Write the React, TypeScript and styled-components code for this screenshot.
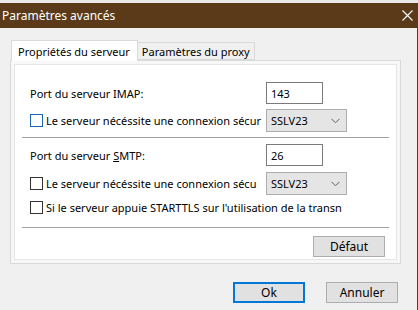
import React from "react";
import styled, { createGlobalStyle } from "styled-components";

const GlobalStyle = createGlobalStyle`
  html, body {
    margin: 0;
    padding: 0;
    background: #e9e9e9;
  }
  body {
    font-family: "Noto Sans", "Open Sans", sans-serif;
    font-size: 11px;
    color: #000;
  }
`;

const Window = styled.div`
  width: 418px;
  box-sizing: border-box;
  display: flex;
  flex-direction: column;
  background: #f0f0f0;
  border-right: 1px solid #5a3a1a;
  margin-top: 3px;
  height: 307px;
  overflow: hidden;
`;

const TitleBar = styled.div`
  height: 25px;
  flex: none;
  background: #5b3a19;
  color: #fff;
  display: flex;
  align-items: center;
  justify-content: space-between;
  padding: 0 4px 0 2px;
  font-size: 12px;
`;

const Body = styled.div`
  flex: 1;
  display: flex;
  flex-direction: column;
  padding: 11px 16px 0 10px;
`;

const TabStrip = styled.div`
  display: flex;
  align-items: flex-end;
  height: 21px;
  position: relative;
  z-index: 1;
`;

const Tab = styled.div<{ $active?: boolean }>`
  box-sizing: border-box;
  height: ${(p) => (p.$active ? "21px" : "18px")};
  margin-left: ${(p) => (p.$active ? "1px" : "0")};
  padding: ${(p) => (p.$active ? "1px 7px 0 6px" : "0 4px")};
  border: 1px solid #d9d9d9;
  border-bottom: ${(p) => (p.$active ? "none" : "1px solid #d9d9d9")};
  border-left: ${(p) => (p.$active ? "1px solid #d9d9d9" : "none")};
  background: ${(p) => (p.$active ? "#fff" : "#f0f0f0")};
  display: flex;
  align-items: center;
  white-space: nowrap;
  margin-bottom: ${(p) => (p.$active ? "-1px" : "0")};
`;

const TabPanel = styled.div`
  height: 204px;
  box-sizing: border-box;
  border: 1px solid #d9d9d9;
  background: #f7f7f7;
  padding: 3px;
  display: flex;
`;

const Page = styled.div`
  flex: 1;
  background: #fff;
  border: 1px solid #e6e6e6;
  display: flex;
  flex-direction: column;
  padding: 17px 11px 0 15px;
`;

const FieldRow = styled.div<{ $mt?: number }>`
  display: grid;
  grid-template-columns: 236px auto;
  align-items: center;
  height: 22px;
  margin-top: ${(p) => p.$mt ?? 0}px;
`;

const Label = styled.span`
  white-space: nowrap;
`;

const TextBox = styled.div`
  width: 57px;
  height: 22px;
  box-sizing: border-box;
  border: 1px solid #7a7a7a;
  background: #fff;
  padding: 0 4px;
  display: flex;
  align-items: center;
`;

const CheckLine = styled.label<{ $width: number }>`
  display: flex;
  align-items: center;
  gap: 3px;
  width: ${(p) => p.$width}px;
  white-space: nowrap;
`;

const CheckText = styled.span`
  flex: 1;
  min-width: 0;
  overflow: hidden;
`;

const Box = styled.span<{ $focus?: boolean }>`
  flex: none;
  width: 13px;
  height: 13px;
  box-sizing: border-box;
  border: 1px solid ${(p) => (p.$focus ? "#1c64b4" : "#333")};
  background: #fff;
`;

const Select = styled.div`
  width: 81px;
  height: 23px;
  box-sizing: border-box;
  border: 1px solid #adadad;
  background: #e5e5e5;
  display: flex;
  align-items: center;
  justify-content: space-between;
  padding: 0 6px 0 4px;
`;

const Separator = styled.div<{ $mt: number }>`
  height: 1px;
  background: #a0a0a0;
  margin: ${(p) => p.$mt}px -4px 0 -8px;
`;

const Actions = styled.div<{ $mt?: number }>`
  display: flex;
  justify-content: flex-end;
  gap: 21px;
  margin-top: ${(p) => p.$mt ?? 0}px;
`;

const Button = styled.div<{ $primary?: boolean }>`
  width: 72px;
  height: 21px;
  box-sizing: border-box;
  background: #e1e1e1;
  border: ${(p) => (p.$primary ? "2px solid #0078d7" : "1px solid #adadad")};
  display: flex;
  align-items: center;
  justify-content: center;
  font-size: 12px;
`;

const Footer = styled(Actions)`
  margin-top: 18px;
  margin-right: 3px;
`;

const Chevron = () => (
  <svg width="9" height="6" viewBox="0 0 9 6">
    <path d="M0.5 0.8 L4.5 4.8 L8.5 0.8" fill="none" stroke="#606060" strokeWidth="1" />
  </svg>
);

const CloseIcon = () => (
  <svg width="11" height="11" viewBox="0 0 11 11">
    <path d="M0.5 0.5 L10.5 10.5 M10.5 0.5 L0.5 10.5" stroke="#fff" strokeWidth="1.1" />
  </svg>
);

export default function App() {
  return (
    <>
      <GlobalStyle />
      <Window>
        <TitleBar>
          <span>Paramètres avancés</span>
          <CloseIcon />
        </TitleBar>
        <Body>
          <TabStrip>
            <Tab $active>Propriétés du serveur</Tab>
            <Tab>Paramètres du proxy</Tab>
          </TabStrip>
          <TabPanel>
            <Page>
              <FieldRow>
                <Label>Port du serveur IMAP:</Label>
                <TextBox>143</TextBox>
              </FieldRow>
              <FieldRow $mt={5}>
                <CheckLine $width={233}>
                  <Box $focus />
                  <CheckText>Le serveur nécéssite une connexion sécur</CheckText>
                </CheckLine>
                <Select>
                  SSLV23
                  <Chevron />
                </Select>
              </FieldRow>
              <Separator $mt={6} />
              <FieldRow $mt={6}>
                <Label>
                  Port du serveur <u>S</u>MTP:
                </Label>
                <TextBox>26</TextBox>
              </FieldRow>
              <FieldRow $mt={6}>
                <CheckLine $width={229}>
                  <Box />
                  <CheckText>Le serveur nécéssite une connexion sécu</CheckText>
                </CheckLine>
                <Select>
                  SSLV23
                  <Chevron />
                </Select>
              </FieldRow>
              <FieldRow $mt={2}>
                <CheckLine $width={327}>
                  <Box />
                  <CheckText>Si le serveur appuie STARTTLS sur l'utilisation de la transn</CheckText>
                </CheckLine>
              </FieldRow>
              <Separator $mt={9} />
              <Actions $mt={8}>
                <Button>Défaut</Button>
              </Actions>
            </Page>
          </TabPanel>
          <Footer>
            <Button $primary>Ok</Button>
            <Button>Annuler</Button>
          </Footer>
        </Body>
      </Window>
    </>
  );
}
